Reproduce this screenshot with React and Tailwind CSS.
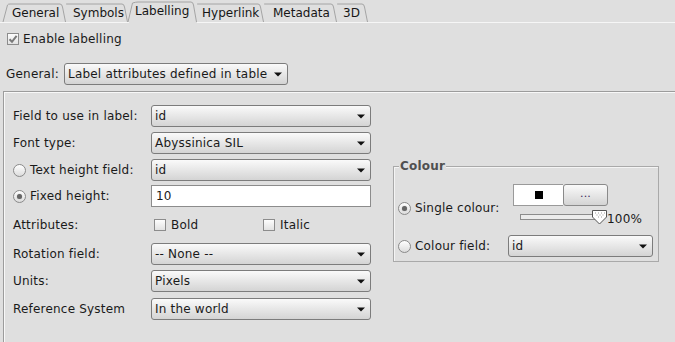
import React from 'react';

/* ── small widgets ─────────────────────────────────────────────────────────── */
const Arrow = () => (
  <svg className="absolute right-[5px] top-[8px]" width="8" height="5" viewBox="0 0 8 5">
    <path d="M0 0.5H8L4 4.5Z" fill="#111" />
  </svg>
);

const Combo = ({ value, className = '' }) => (
  <div className={`relative h-[22px] flex items-center rounded-[3px] border border-[#7c7c7c] bg-linear-to-b from-[#fafafa] to-[#d4d4d4] pl-[3px] ${className}`}>
    <span className="leading-none whitespace-nowrap">{value}</span>
    <Arrow />
  </div>
);

const Radio = ({ checked }) => (
  <span className="relative w-[13px] h-[13px] rounded-full border border-[#8a8a8a] bg-linear-to-b from-[#ffffff] to-[#dcdcdc] shrink-0 flex items-center justify-center">
    {checked && <span className="w-[5px] h-[5px] rounded-full bg-[#666] shadow-[0_0_1px_#999]" />}
  </span>
);

const Check = ({ checked }) => (
  <span className="w-[12px] h-[12px] border border-[#8c8c8c] bg-linear-to-b from-[#fdfdfd] to-[#e2e2e2] shrink-0 flex items-center justify-center">
    {checked && (
      <svg width="10" height="10" viewBox="0 0 10 10">
        <path d="M1.5 5.2L4 7.8L8.6 1.8" fill="none" stroke="#7a7a7a" strokeWidth="2" />
      </svg>
    )}
  </span>
);

/* ── tab strip ─────────────────────────────────────────────────────────────── */
const TABS = [
  { label: 'General', w: 'w-[66px]', pl: 'pl-[12px]', first: true },
  { label: 'Symbols', w: 'w-[62px]', pl: 'pl-[7px]' },
  { label: 'Labelling', w: 'w-[69px]', pl: 'pl-[7px]', active: true },
  { label: 'Hyperlink', w: 'w-[67px]', pl: 'pl-[5px]' },
  { label: 'Metadata', w: 'w-[73px]', pl: 'pl-[9px]' },
  { label: '3D', w: 'w-[31px]', pl: 'pl-[6px]' },
];

const Tab = ({ label, w, pl, first, active, width }) => {
  const top = active ? 2 : 4;
  const left = first ? 'M3 22L7.5 ' + (top + 1) : active ? 'M0 22L4.5 ' + (top + 1) : 'M0 ' + top;
  return (
    <div className={`relative h-[22px] ${w} ${pl} flex tracking-normal ${active ? 'pt-[4px]' : 'pt-[6px]'}`}>
      <svg className="absolute left-0 top-0" width={width} height="23">
        <path
          d={`${left} Q${first || active ? 8 : 0} ${top} ${first || active ? 10 : 2} ${top}H${width - 6}Q${width - 4} ${top} ${width - 3.5} ${top + 3}L${width - 0.5} 22`}
          fill="none"
          stroke="#a4a4a4"
        />
        {active && <rect x="1" y="22" width={width - 1} height="1" fill="#dfdfdf" />}
      </svg>
      <span className="relative leading-[14px] text-[#161616] whitespace-nowrap">{label}</span>
    </div>
  );
};

const TAB_WIDTHS = [66, 62, 69, 67, 73, 31];

/* ── left form rows ────────────────────────────────────────────────────────── */
const Row = ({ label, radio, children, className = '' }) => (
  <div className={`flex items-center h-[22px] ${className}`}>
    <div className="w-[138px] flex items-center gap-[4px] whitespace-nowrap">
      {radio !== undefined && <Radio checked={radio} />}
      <span>{label}</span>
    </div>
    {children}
  </div>
);

export default function App() {
  return (
    <div className="w-[675px] h-[342px] overflow-hidden bg-[#dfdfdf] text-[12px] tracking-[0.2px] text-[#1a1a1a] font-['DejaVu_Sans',sans-serif] flex flex-col">
      {/* Tabs */}
      <div className="relative flex h-[23px] shrink-0 border-b border-[#f6f6f6]">
        {TABS.map((t, i) => (
          <Tab key={t.label} {...t} width={TAB_WIDTHS[i]} />
        ))}
      </div>

      {/* Enable labelling */}
      <div className="flex items-center gap-[4px] ml-[7px] mt-[9px] h-[13px]">
        <Check checked />
        <span>Enable labelling</span>
      </div>

      {/* General */}
      <div className="flex items-center mt-[18px] ml-[6px] h-[22px]">
        <span className="w-[58px]">General:</span>
        <Combo value="Label attributes defined in table" className="w-[224px]" />
      </div>

      {/* Panel */}
      <div className="mt-[6px] ml-[3px] flex-1 border-l border-t border-[#9c9c9c] shadow-[inset_1px_1px_0_#f8f8f8] pl-[9px] pt-[13px] flex">
        <div className="flex flex-col">
          <Row label="Field to use in label:">
            <Combo value="id" className="w-[220px]" />
          </Row>
          <Row label="Font type:" className="mt-[5px]">
            <Combo value="Abyssinica SIL" className="w-[220px]" />
          </Row>
          <Row label="Text height field:" radio={false} className="mt-[5px]">
            <Combo value="id" className="w-[220px]" />
          </Row>
          <Row label="Fixed height:" radio className="mt-[4px]">
            <div className="w-[220px] h-[22px] bg-white border border-[#8c8c8c] flex items-center pl-[4px]">10</div>
          </Row>
          <Row label="Attributes:" className="mt-[7px]">
            <div className="flex items-center w-[220px] pl-[3px]">
              <div className="flex items-center gap-[5px] w-[109px]">
                <Check />
                <span>Bold</span>
              </div>
              <div className="flex items-center gap-[5px]">
                <Check />
                <span>Italic</span>
              </div>
            </div>
          </Row>
          <Row label="Rotation field:" className="mt-[7px]">
            <Combo value="-- None --" className="w-[220px]" />
          </Row>
          <Row label="Units:" className="mt-[5px]">
            <Combo value="Pixels" className="w-[220px]" />
          </Row>
          <Row label="Reference System" className="mt-[6px]">
            <Combo value="In the world" className="w-[220px]" />
          </Row>
        </div>

        {/* Colour group */}
        <div className="ml-[22px] mt-[61px]">
          <div className="relative w-[266px] h-[96px] border border-[#a9a9a9] shadow-[inset_1px_1px_0_#f4f4f4]">
            <span className="absolute left-[5px] top-[-8px] px-[1px] bg-[#dfdfdf] font-bold text-[#505050] leading-[14px]">Colour</span>
            <div className="flex items-start pl-[4px] pt-[17px]">
              <div className="flex items-center gap-[4px] w-[115px] mt-[15px] whitespace-nowrap">
                <Radio checked />
                <span>Single colour:</span>
              </div>
              <div className="flex flex-col">
                <div className="flex h-[22px]">
                  <div className="w-[50px] bg-white border border-[#9a9a9a] border-r-0 flex items-center justify-center">
                    <span className="w-[8px] h-[8px] bg-black" />
                  </div>
                  <div className="w-[45px] rounded-[3px] border border-[#8a8a8a] bg-linear-to-b from-[#fafafa] to-[#d4d4d4] flex items-center justify-center text-[#3a2a5a] text-[11px] leading-none pb-[3px]">...</div>
                </div>
                <div className="flex items-center mt-[3px] ml-[7px] h-[16px]">
                  <div className="relative w-[80px] h-[6px] border border-[#8c8c8c] bg-[#ececec]">
                    <svg className="absolute left-[71px] top-[-5px]" width="16" height="16" viewBox="0 0 16 16">
                      <path d="M0.5 0.5H14.5V7L7.5 14L0.5 7Z" fill="#fff" stroke="#555" />
                      <path d="M3 3h1M6 3h1M9 3h1M12 3h1M4.5 5h1M7.5 5h1M10.5 5h1M6 7h1M9 7h1" stroke="#999" />
                    </svg>
                  </div>
                  <span className="ml-[7px] mt-[3px]">100%</span>
                </div>
              </div>
            </div>
            <div className="flex items-center pl-[4px] mt-[10px]">
              <div className="flex items-center gap-[4px] w-[110px] whitespace-nowrap">
                <Radio />
                <span>Colour field:</span>
              </div>
              <Combo value="id" className="w-[145px]" />
            </div>
          </div>
        </div>
      </div>
    </div>
  );
}
